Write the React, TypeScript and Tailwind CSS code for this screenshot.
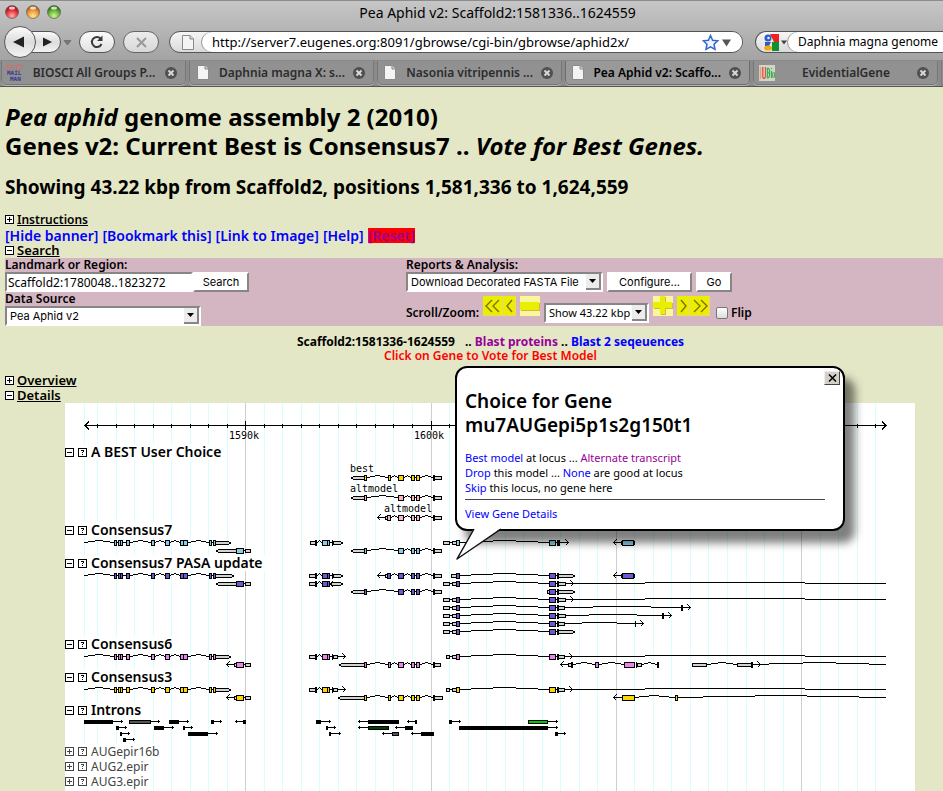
import type { ReactNode } from "react";

type Shape =
  | ["cds", number, number]
  | ["utr", number, number]
  | ["utrR", number, number]
  | ["utrL", number, number]
  | ["blk", number, number]
  | ["arc", number, number]
  | ["line", number, number, number?]
  | ["right", number, number]
  | ["left", number, number];

type Model = { y: number; color?: string; shapes: Shape[] };

const SKY = "#87ceeb";
const SLATE = "#6a5acd";
const VIOLET = "#ee82ee";
const GOLD = "#ffd700";
const PINK = "#ffb6c1";
const UTR = "#d3d3d3";

function ShapeView({ s, y, color }: { s: Shape; y: number; color: string }) {
  const [kind, a, b] = s;
  const w = b - a;
  switch (kind) {
    case "cds":
      return <rect x={a + 0.5} y={y - 2.5} width={w - 1} height={5} fill={color} stroke="#000" />;
    case "utr":
      return <rect x={a + 0.5} y={y - 1.5} width={w - 1} height={3} fill={UTR} stroke="#000" />;
    case "utrR":
      return <path d={`M${a + 0.5} ${y - 1.5}H${b - 3}L${b - 0.5} ${y}L${b - 3} ${y + 1.5}H${a + 0.5}Z`} fill={UTR} stroke="#000" />;
    case "utrL":
      return <path d={`M${b - 0.5} ${y - 1.5}H${a + 3}L${a + 0.5} ${y}L${a + 3} ${y + 1.5}H${b - 0.5}Z`} fill={UTR} stroke="#000" />;
    case "blk":
      return <rect x={a} y={y - 3} width={w} height={6} fill="#000" />;
    case "line":
      return <rect x={a} y={y - 1 + (s[3] ?? 0)} width={w} height={1} fill="#000" />;
    case "arc": {
      const q = [a, a + w / 8, a + (w * 3) / 8, a + (w * 5) / 8, a + (w * 7) / 8, b].map(Math.round);
      return (
        <g>
          {[0, 1, 2, 1, 0].map((lift, i) => (
            <rect key={i} x={q[i]} y={y - 1 - lift} width={q[i + 1] - q[i]} height={1} fill="#000" />
          ))}
        </g>
      );
    }
    case "right":
      return <path d={`M${a} ${y - 0.5}H${b}M${b - 2.5} ${y - 3.5}l3 3l-3 3`} fill="none" stroke="#000" />;
    case "left":
      return <path d={`M${b} ${y - 0.5}H${a}M${a + 2.5} ${y - 3.5}l-3 3l3 3`} fill="none" stroke="#000" />;
  }
}

function Chart({ top, height, children }: { top: number; height: number; children: ReactNode }) {
  return (
    <svg className="block w-[850px] relative" height={height} viewBox={`65 ${top} 850 ${height}`} shapeRendering="crispEdges" aria-hidden="true">
      {children}
    </svg>
  );
}

function Models({ top, height, models, color, children }: { top: number; height: number; models: Model[]; color: string; children?: ReactNode }) {
  return (
    <Chart top={top} height={height}>
      {models.map((m, i) => (
        <g key={i}>
          {m.shapes.map((s, j) => (
            <ShapeView key={j} s={s} y={m.y} color={m.color ?? color} />
          ))}
        </g>
      ))}
      {children}
    </Chart>
  );
}

const geneA = (end: number): Shape[] => [
  ["arc", 84, 114], ["cds", 114, 117], ["line", 117, 118], ["cds", 118, 121], ["cds", 120, 123], ["line", 123, 126],
  ["cds", 126, 130], ["arc", 130, 151], ["cds", 151, 155], ["arc", 155, 165], ["cds", 165, 170], ["arc", 170, 180],
  ["cds", 180, 184], ["cds", 183, 188], ["arc", 188, 209], ["cds", 209, 212], ["line", 212, 213], ["utrR", 215, end], ["cds", 213, 216],
];
const geneB: Shape[] = [["utrL", 216, 237], ["cds", 236, 244], ["line", 244, 245], ["utr", 245, 251]];
const geneBShort: Shape[] = [["left", 227, 235], ["utr", 234, 237], ["cds", 236, 244], ["line", 244, 245], ["utr", 245, 251]];
const geneC = (start: number): Shape[] => [
  ["utr", start, 316], ["blk", 315, 317], ["arc", 317, 322], ["cds", 322, 328], ["cds", 327, 330], ["line", 330, 332], ["blk", 332, 333],
];
const geneD = (start: number, extra: boolean, end = 442): Shape[] => [
  ["utrL", start, 365], ["cds", 364, 367],
  ...((extra ? [["arc", 367, 388], ["cds", 388, 391], ["arc", 391, 398]] : [["arc", 367, 398]]) as Shape[]),
  ["cds", 398, 404], ["arc", 404, 411], ["cds", 411, 415], ["line", 415, 416], ["cds", 416, 420], ["arc", 420, 433], ["utr", 434, end], ["blk", 433, 435],
];
const geneDShort: Shape[] = [
  ["left", 378, 385], ["utr", 385, 388], ["cds", 387, 391], ["arc", 391, 398], ["cds", 398, 404], ["arc", 404, 411],
  ["cds", 411, 415], ["line", 415, 416], ["cds", 416, 420], ["arc", 420, 433], ["utr", 434, 442], ["blk", 433, 435],
];
const geneE = (start: number, firstEnd: number): Shape[] => [
  ["utr", start, firstEnd], ["line", firstEnd, 452], ["utr", 452, 457], ["cds", 456, 460], ["arc", 460, 549], ["cds", 549, 556], ["line", 556, 557],
];
const tailUtr = (end: number): Shape[] => [["utr", 557, end], ["blk", 557, 559]];
const tailRight: Shape[] = [["utrR", 557, 575], ["blk", 557, 559]];
const longRun: Shape[] = [["line", 572, 645], ["line", 645, 805, -1], ["line", 805, 886]];
const pasaE = [...geneE(443, 450)];

const bestModels: Model[] = [
  { y: 478, color: GOLD, shapes: geneD(351, true) },
  { y: 498, shapes: geneD(351, false) },
  { y: 518, shapes: geneDShort },
];
const c7Models: Model[] = [
  { y: 543, shapes: [...geneA(231), ...geneC(310), ["utrR", 333, 343], ...geneE(443, 450), ["blk", 557, 560], ["right", 560, 568], ["left", 614, 622], ["utr", 621, 624], ["utr", 632, 635], ["cds", 622, 634]] },
  { y: 551, shapes: [...geneB, ...geneD(351, false)] },
];
const pasaModels: Model[] = [
  { y: 576, shapes: [...geneA(234), ...geneC(309), ["utrR", 333, 343], ...geneDShort, ["utr", 451, 457], ["cds", 456, 460], ["arc", 460, 549], ["cds", 549, 556], ["line", 556, 557], ...tailRight, ["left", 614, 622], ["utr", 621, 624], ["utr", 632, 635], ["cds", 622, 634]] },
  { y: 584, shapes: [...geneB, ...geneC(309), ["utrR", 331, 343], ["line", 329, 331, 1], ...pasaE, ...tailUtr(566), ["right", 566, 573], ...longRun] },
  { y: 592, shapes: [...geneD(351, false), ["utr", 547, 550], ["cds", 549, 556], ["line", 556, 557], ...tailRight] },
  { y: 600, shapes: [...pasaE, ...tailUtr(566), ["right", 566, 573], ...longRun] },
  { y: 608, shapes: [...pasaE, ...tailUtr(565), ["line", 565, 593], ["line", 593, 651, -1], ["line", 651, 681], ["blk", 681, 683], ["right", 683, 690]] },
  { y: 616, shapes: [...pasaE, ...tailUtr(566), ["line", 566, 589], ["line", 589, 637, -1], ["line", 637, 662], ["blk", 662, 664], ["right", 664, 671]] },
  { y: 624, shapes: [...pasaE, ...tailUtr(565), ["line", 565, 582], ["line", 582, 617, -1], ["line", 617, 635], ["blk", 635, 636], ["right", 636, 643]] },
  { y: 632, shapes: [...pasaE, ...tailRight] },
];
const c6Models: Model[] = [
  { y: 657, shapes: [...geneA(231), ...geneC(309), ["utr", 333, 338], ["right", 338, 345], ...geneE(446, 450), ...tailUtr(565), ["right", 565, 572], ...longRun] },
  {
    y: 665,
    shapes: [
      ...geneBShort, ...geneD(339, true, 441), ["left", 561, 568], ["utr", 568, 572], ["blk", 571, 573], ["arc", 573, 595], ["cds", 595, 599],
      ["arc", 599, 624], ["cds", 624, 635], ["blk", 636, 637], ["utr", 637, 642], ["arc", 642, 657], ["blk", 657, 659],
      ["utr", 692, 707], ["arc", 707, 737], ["utr", 737, 752], ["blk", 751, 753], ["right", 753, 760],
      ["line", 760, 769], ["line", 769, 803, -1], ["line", 803, 836, -2], ["line", 836, 869, -1], ["line", 869, 886],
    ],
  },
];
const c3Models: Model[] = [
  { y: 690, shapes: c6Models[0].shapes },
  {
    y: 698,
    shapes: [
      ...geneBShort, ...geneD(338, true, 443), ["left", 614, 622], ["cds", 622, 635], ["line", 635, 639], ["line", 639, 649, -1], ["line", 649, 659, -2],
      ["line", 659, 669, -1], ["line", 669, 675], ["cds", 675, 678], ["line", 678, 703], ["line", 703, 755, -1], ["line", 755, 807, -2], ["line", 807, 859, -1], ["line", 859, 886],
    ],
  },
];

/* row, bar start, bar end, arrow tip, fill */
const introns: [number, number, number, number, string?][] = [
  [0, 84, 113, 123], [0, 129, 151, 160, "#555"], [0, 169, 179, 189], [0, 211, 214, 222], [0, 243, 246, 235], [0, 316, 321, 331],
  [0, 368, 399, 358], [0, 415, 417, 407], [0, 449, 452, 461], [0, 528, 548, 558, "#00c800"],
  [1, 116, 119, 127], [1, 154, 164, 174], [1, 183, 185, 193], [1, 326, 328, 336], [1, 368, 389, 358, "#004000"], [1, 405, 413, 395], [1, 459, 548, 558],
  [2, 120, 122, 130], [2, 188, 208, 218], [2, 329, 331, 341], [2, 392, 399, 382, "#555"], [2, 421, 434, 411], [2, 555, 558, 566],
  [3, 123, 126, 135],
];

const ticks = Array.from({ length: 43 }, (_, i) => ({ x: Math.floor(97.5 + i * 18.53), major: i % 10 === 8 })).filter((t) => t.x < 886);

function Toggle({ open }: { open: boolean }) {
  return (
    <svg width="9" height="9" viewBox="0 0 9 9" shapeRendering="crispEdges" className="shrink-0" aria-hidden="true">
      <rect x="0.5" y="0.5" width="8" height="8" fill="#fff" stroke="currentColor" />
      <path d={open ? "M2 4.5H7" : "M2 4.5H7M4.5 2V7"} stroke="currentColor" />
    </svg>
  );
}

function HelpIcon() {
  return (
    <svg width="9" height="9" viewBox="0 0 9 9" shapeRendering="crispEdges" className="shrink-0" aria-hidden="true">
      <rect x="0.5" y="0.5" width="8" height="8" fill="#fff" stroke="currentColor" />
      <path d="M3 2.5H6M5.5 3V4M4 4.5H5M4 6.5H5" stroke="currentColor" />
    </svg>
  );
}

function TrackLabel({ name, open = true }: { name: string; open?: boolean }) {
  return (
    <div className={`relative flex items-center ${open ? "h-4 text-black" : "h-[15px] text-[#444]"}`}>
      <button type="button" className="flex items-center gap-1 bg-white pr-1" aria-label={`Toggle ${name}`}>
        <Toggle open={open} />
        <HelpIcon />
        <span className={open ? "text-[14px] leading-4 font-semibold" : "text-[12px] leading-[15px]"}>{name}</span>
      </button>
    </div>
  );
}

function SectionHead({ name, open, small }: { name: string; open: boolean; small?: boolean }) {
  return (
    <button type="button" className="flex h-[15px] items-center gap-[3px] self-start font-semibold text-black">
      <Toggle open={open} />
      <span className={`underline leading-[15px] ${small ? "text-[12px]" : "text-[13px]"}`}>{name}</span>
    </button>
  );
}

function Picker({ label, value, className }: { label: string; value: string; className: string }) {
  return (
    <div className={`relative h-5 shrink-0 border-2 border-t-[#868686] border-l-[#868686] border-r-white border-b-white bg-white ${className}`}>
      <select aria-label={label} className="block h-4 w-full appearance-none bg-transparent pl-[3px] text-[11px] leading-4 outline-none">
        <option>{value}</option>
      </select>
      <span className="pointer-events-none absolute top-0 right-0 flex h-4 w-[15px] items-center justify-center border-r-2 border-b-2 border-[#868686] bg-[#ececec]">
        <svg width="7" height="4" viewBox="0 0 7 4" aria-hidden="true"><path d="M0 0H7L3.5 4Z" /></svg>
      </span>
    </div>
  );
}

function PlainButton({ children, width }: { children: ReactNode; width: string }) {
  return (
    <button type="button" className={`h-5 shrink-0 border-2 border-t-white border-l-white border-r-[#868686] border-b-[#868686] bg-white text-center font-[Inter] text-[11px] leading-4 ${width}`}>
      {children}
    </button>
  );
}

function YellowButton({ label, w, pale, d, fill }: { label: string; w: number; pale?: boolean; d: string; fill?: boolean }) {
  return (
    <button type="button" aria-label={label} className="shrink-0">
      <svg width={w} height="20" viewBox={`0 0 ${w} 20`} className="block" aria-hidden="true">
        <rect width={w} height="20" fill={pale ? "#f8f89a" : "#e8f000"} />
        {!pale && <path d={`M0 19.5H${w - 0.5}V0`} fill="none" stroke="#f2d27a" />}
        {fill ? <><path d={d} fill="#dcae5c" transform="translate(1 1)" /><path d={d} fill="#e8f000" /></> : <path d={d} fill="none" stroke="#8a6a00" strokeWidth="1.4" />}
      </svg>
    </button>
  );
}

function PageIcon() {
  return (
    <svg width="12" height="15" viewBox="0 0 12 15" className="shrink-0" aria-hidden="true">
      <path d="M0.5 0.5H8L11.5 4V14.5H0.5Z" fill="#f4f4f4" stroke="#8a8a8a" />
      <path d="M8 0.5V4H11.5" fill="#d0d0d0" stroke="#8a8a8a" />
    </svg>
  );
}

function MailmanIcon() {
  return (
    <svg width="17" height="18" viewBox="0 0 17 18" className="shrink-0 overflow-visible" aria-hidden="true">
      <path d="M0 1.500H9M0 5.500H9M1 3.500H8" stroke="#d66" strokeDasharray="2 1" />
      <circle cx="13" cy="3.500" r="2.800" fill="none" stroke="#d66" />
      <text x="1" y="11" className="font-['DejaVu_Sans_Mono',monospace] text-[6px] font-bold" fill="#33388f">MAIL</text>
      <text x="4" y="17" className="font-['DejaVu_Sans_Mono',monospace] text-[6px] font-bold" fill="#33388f">MAN</text>
    </svg>
  );
}

function BioIcon() {
  return (
    <svg width="16" height="16" viewBox="0 0 16 16" className="shrink-0" aria-hidden="true">
      <rect width="16" height="16" fill="#cfd6c8" />
      <path d="M1.5 2V14" stroke="#e8a070" strokeWidth="1.500" />
      <path d="M3.800 2V12Q5 15 6.500 12V2" fill="none" stroke="#e05050" strokeWidth="1.300" />
      <path d="M8.500 3V13Q11 13 10.500 8H8.500M8.500 3Q11 3 10.500 8M12.500 6V13M12.500 3V4" fill="none" stroke="#3cae4c" strokeWidth="1.200" />
      <ellipse cx="14.600" cy="10" rx="1" ry="3" fill="none" stroke="#3cae4c" />
    </svg>
  );
}

function Tab({ icon, title, active }: { icon: ReactNode; title: string; active?: boolean }) {
  return (
    <div role="tab" aria-selected={!!active} className={`flex h-6 w-[185px] shrink-0 items-center gap-2 rounded-b-[5px] border border-t-0 pr-2 pl-1 shadow-[0_1px_0_#b4b4b4] ${active ? "border-[#6d6d6d] bg-[#999] text-black" : "border-[#777] bg-[#919191] text-[#2c2c2c]"}`}>
      <span className="flex w-[17px] justify-center">{icon}</span>
      <span className="flex-1 text-center text-[12px] leading-4 font-semibold whitespace-nowrap">{title}</span>
      <button type="button" aria-label={`Close ${title}`}>
        <svg width="12" height="12" viewBox="0 0 12 12" className="block" aria-hidden="true">
          <circle cx="6" cy="6" r="6" fill="#505050" />
          <path d="M3.500 3.500L8.500 8.500M8.500 3.500L3.500 8.500" stroke="#d8d8d8" strokeWidth="2" />
        </svg>
      </button>
    </div>
  );
}

function BrowserChrome() {
  return (
    <header className="shrink-0 overflow-hidden border-t border-[#8c8c8c] bg-linear-to-b from-[#c6c6c6] to-[#949494]">
      <div className="relative flex h-[23px] items-center justify-center">
        <svg width="60" height="16" viewBox="0 0 60 16" className="absolute top-[3px] left-1" aria-hidden="true">
          <defs>
            <radialGradient id="red" cx="0.5" cy="0.8" r="0.7"><stop offset="0" stopColor="#ffb0b0" /><stop offset="0.6" stopColor="#e8343c" /><stop offset="1" stopColor="#a01018" /></radialGradient>
            <radialGradient id="amber" cx="0.5" cy="0.8" r="0.7"><stop offset="0" stopColor="#ffe890" /><stop offset="0.6" stopColor="#f0983c" /><stop offset="1" stopColor="#a86010" /></radialGradient>
            <radialGradient id="green" cx="0.5" cy="0.8" r="0.7"><stop offset="0" stopColor="#d0f890" /><stop offset="0.6" stopColor="#6cb43c" /><stop offset="1" stopColor="#2c6c14" /></radialGradient>
          </defs>
          {["red", "amber", "green"].map((c, i) => (
            <g key={c}>
              <circle cx={8 + i * 21} cy="8" r="6.500" fill={`url(#${c})`} stroke="#555" strokeOpacity="0.6" />
              <ellipse cx={8 + i * 21} cy="4" rx="3" ry="1.500" fill="#fff" opacity="0.75" />
            </g>
          ))}
        </svg>
        <h1 className="pl-[52px] text-[14px] leading-5">Pea Aphid v2: Scaffold2:1581336..1624559</h1>
      </div>
      <div className="flex h-9 items-center pl-1">
        <svg width="70" height="32" viewBox="0 0 70 32" className="shrink-0" role="img" aria-label="Back and forward">
          <defs>
            <linearGradient id="knob" x2="0" y2="1"><stop offset="0" stopColor="#fdfdfd" /><stop offset="0.5" stopColor="#dcdcdc" /><stop offset="1" stopColor="#f4f4f4" /></linearGradient>
          </defs>
          <rect x="16" y="5.500" width="40.500" height="21" rx="10.500" fill="url(#knob)" stroke="#555" />
          <circle cx="16" cy="16" r="15.500" fill="url(#knob)" stroke="#555" />
          <path d="M9 16L20 10.500V21.500Z" fill="#222" />
          <path d="M39 11.500V20.500L48 16Z" fill="#222" />
          <path d="M60 14.500H67L63.500 19Z" fill="#777" stroke="#555" strokeWidth="0.500" />
        </svg>
        <button type="button" aria-label="Reload" className="ml-[5px] flex h-[22px] w-9 shrink-0 items-center justify-center rounded-full border border-[#555] bg-linear-to-b from-[#fbfbfb] to-[#e2e2e2]">
          <svg width="14" height="14" viewBox="0 0 14 14" aria-hidden="true">
            <path d="M10.500 3.500A5 5 0 1 0 11.500 9" fill="none" stroke="#3a3a3a" strokeWidth="2" />
            <path d="M12.500 0.500V6H7Z" fill="#3a3a3a" />
          </svg>
        </button>
        <button type="button" aria-label="Stop" className="ml-2 flex h-[22px] w-9 shrink-0 items-center justify-center rounded-full border border-[#666] bg-linear-to-b from-[#ececec] to-[#d8d8d8]">
          <svg width="11" height="11" viewBox="0 0 11 11" aria-hidden="true"><path d="M1 1L10 10M10 1L1 10" stroke="#999" strokeWidth="2" /></svg>
        </button>
        <div className="ml-[10px] flex h-[22px] min-w-0 flex-[574] items-center rounded-full border border-[#555] bg-linear-to-b from-[#f6f6f6] to-[#dadada] pl-3">
          <PageIcon />
          <div className="ml-2 flex h-5 min-w-0 flex-1 items-center rounded-full bg-white pr-[10px] pl-[10px] shadow-[-1px_0_0_#999]">
            <input type="text" aria-label="Address" defaultValue="http://server7.eugenes.org:8091/gbrowse/cgi-bin/gbrowse/aphid2x/" className="h-5 min-w-0 flex-1 bg-transparent text-[13px] leading-5 outline-none" />
            <svg width="30" height="17" viewBox="0 0 30 17" className="shrink-0" aria-hidden="true">
              <path d="M8.500 1.500L10.600 6.200L15.700 6.800L12 10.200L13 15.300L8.500 12.800L4 15.300L5 10.200L1.300 6.800L6.400 6.200Z" fill="#eef4ff" stroke="#3465d0" strokeWidth="1.500" />
              <path d="M20 5.500H29L24.500 12.500Z" fill="#555" />
            </svg>
          </div>
        </div>
        <div className="ml-3 flex h-[22px] w-[188px] shrink-0 items-center rounded-l-full border border-r-0 border-[#555] bg-linear-to-b from-[#f6f6f6] to-[#dadada] pl-[6px]">
          <svg width="26" height="17" viewBox="0 0 26 17" className="shrink-0" aria-hidden="true">
            <path d="M8 0H17V8H12Z" fill="#e22" />
            <path d="M10 8H17V17H9Z" fill="#109030" />
            <path d="M0 9H10V17H0Z" fill="#e8e8e8" />
            <circle cx="6" cy="4" r="3.500" fill="#2a5cc8" />
            <path d="M3 8H9L7 12H3Z" fill="#2a5cc8" />
            <ellipse cx="6" cy="14" rx="4" ry="2.600" fill="#f4a80c" />
            <circle cx="6.500" cy="4" r="1.300" fill="#eee" />
            <path d="M19 6.500H25L22 10.500Z" fill="#444" />
          </svg>
          <input type="text" aria-label="Web search" defaultValue="Daphnia magna genome" className="h-5 min-w-0 flex-1 rounded-l-full bg-white pl-[10px] text-[12px] leading-5 shadow-[-1px_0_0_#999] outline-none" />
        </div>
      </div>
      <div role="tablist" className="flex h-[27px] gap-[3px] border-t border-b border-t-[#888] border-b-[#555] bg-[#8b8b8b] pl-px">
        <Tab icon={<MailmanIcon />} title="BIOSCI All Groups P..." />
        <Tab icon={<PageIcon />} title="Daphnia magna X: s..." />
        <Tab icon={<PageIcon />} title="Nasonia vitripennis ..." />
        <Tab icon={<PageIcon />} title="Pea Aphid v2: Scaffo..." active />
        <Tab icon={<BioIcon />} title="EvidentialGene" />
        <div className="h-6 flex-1 rounded-bl-[5px] border-b border-l border-[#777] bg-[#919191]" />
      </div>
    </header>
  );
}

function SearchForm() {
  return (
    <form className="flex bg-[#d4b6c2] text-[12px] font-semibold" onSubmit={(e) => e.preventDefault()}>
      <div className="w-[401px] shrink-0">
        <label htmlFor="landmark" className="block h-[14px] leading-[13px]">Landmark or Region:</label>
        <div className="flex font-normal">
          <input id="landmark" type="text" defaultValue="Scaffold2:1780048..1823272" className="h-5 w-[188px] border-2 border-t-[#868686] border-l-[#868686] border-r-white border-b-white bg-white px-px text-[12px] outline-none" />
          <PlainButton width="w-14">Search</PlainButton>
        </div>
        <p className="h-[14px] leading-[13px]">Data Source</p>
        <div className="font-normal"><Picker label="Data Source" value="Pea Aphid v2" className="w-[196px] font-[Inter]" /></div>
      </div>
      <div className="min-w-0 flex-1">
        <p className="h-[14px] leading-[13px]">Reports &amp; Analysis:</p>
        <div className="flex gap-1 font-normal">
          <Picker label="Report" value="Download Decorated FASTA File" className="w-[197px] font-[Inter]" />
          <PlainButton width="w-[85px]">Configure...</PlainButton>
          <PlainButton width="w-9">Go</PlainButton>
        </div>
        <div className="flex h-[34px] items-end gap-1 pb-[3px]">
          <span className="w-[73px] leading-5 whitespace-nowrap">Scroll/Zoom:</span>
          <div className="mb-[7px] flex">
            <YellowButton label="Scroll far left" w={20} d="M9 4L3 10L9 16M16 4L10 10L16 16" />
            <YellowButton label="Scroll left" w={13} d="M9 4L4 10L9 16" />
          </div>
          <div className="mb-[7px] flex"><YellowButton label="Zoom out" w={20} pale fill d="M0 6H19V14H0Z" /></div>
          <div className="font-normal"><Picker label="Zoom level" value="Show 43.22 kbp" className="w-[105px]" /></div>
          <div className="mb-[7px] flex"><YellowButton label="Zoom in" w={20} pale fill d="M7 0H12V6H19V12H12V18H7V12H0V6H7Z" /></div>
          <div className="mb-[7px] flex">
            <YellowButton label="Scroll right" w={13} d="M4 4L9 10L4 16" />
            <YellowButton label="Scroll far right" w={20} d="M4 4L10 10L4 16M11 4L17 10L11 16" />
          </div>
          <label className="ml-[2px] flex items-center gap-[3px] leading-5">
            <input type="checkbox" className="size-3 appearance-none rounded-[2px] border border-[#777] bg-linear-to-b from-white to-[#ddd]" />
            Flip
          </label>
        </div>
      </div>
    </form>
  );
}

function GeneBalloon() {
  const blue = "text-[#0000ff]";
  return (
    <div role="dialog" aria-label="Choice for Gene" className="absolute -top-[37px] left-[390px] w-[390px]">
      <div className="rounded-[12px] border-2 border-black bg-white px-2 pt-[21px] pb-2 shadow-[10px_12px_9px_rgba(0,0,0,0.5)]">
        <button type="button" aria-label="Close" className="absolute top-[5px] right-[5px] flex h-[14px] w-4 items-center justify-center border border-t-[#eee] border-l-[#eee] border-r-[#444] border-b-[#444] bg-[#d4d0c8]">
          <svg width="9" height="8" viewBox="0 0 9 8" aria-hidden="true"><path d="M1 0.500L8 7.500M8 0.500L1 7.500" stroke="#000" strokeWidth="1.500" /></svg>
        </button>
        <h3 className="text-[19px] leading-6 font-semibold">Choice for Gene<br />mu7AUGepi5p1s2g150t1</h3>
        <p className="mt-[13px] text-[11px] leading-[15px]">
          <a href="#best" className={blue}>Best model</a> at locus ... <a href="#alt" className="text-[#990099]">Alternate transcript</a><br />
          <a href="#drop" className={blue}>Drop</a> this model ... <a href="#none" className={blue}>None</a> are good at locus<br />
          <a href="#skip" className={blue}>Skip</a> this locus, no gene here
        </p>
        <hr className="mt-1 mr-[10px] border-t border-[#444]" />
        <p className="mt-[6px] text-[11px] leading-[15px]"><a href="#details" className={blue}>View Gene Details</a></p>
      </div>
      <svg width="50" height="34" viewBox="0 0 50 34" className="absolute top-full -mt-[3px]" aria-hidden="true">
        <path d="M19 0L2 31L46 0Z" fill="#fff" />
        <path d="M19 1L2 31L46 1" fill="none" stroke="#111" strokeWidth="1.500" strokeLinejoin="round" />
      </svg>
    </div>
  );
}

function GridLines() {
  return (
    <svg className="absolute inset-0 h-full w-[850px]" shapeRendering="crispEdges" aria-hidden="true">
      <rect x="19" width="1" height="100%" fill="#d8ffff" />
      {ticks.map((t) => (
        <rect key={t.x} x={t.x - 65} width="1" height="100%" fill={t.major ? "#cfcfcf" : "#d8ffff"} />
      ))}
    </svg>
  );
}

export default function App() {
  return (
    <div className="flex min-h-screen flex-col overflow-x-hidden bg-[#e4e7c5] font-['Noto_Sans',sans-serif] text-black">
      <BrowserChrome />
      <main className="flex flex-1 flex-col pl-[5px]">
        <h1 className="mt-[15px] text-[24px] leading-[29px] font-bold">
          <i>Pea aphid</i> genome assembly 2 (2010)<br />
          Genes v2: Current Best is Consensus7 .. <i>Vote for Best Genes.</i>
        </h1>
        <h2 className="mt-[15px] text-[19px] leading-6 font-bold">Showing 43.22 kbp from Scaffold2, positions 1,581,336 to 1,624,559</h2>
        <div className="mt-[13px] flex flex-col">
          <SectionHead name="Instructions" open={false} small />
          <nav className="flex h-4 items-end gap-1 text-[14px] leading-[15px] font-semibold text-[#0000ff]">
            <a href="#hide">[Hide banner]</a>
            <a href="#bookmark">[Bookmark this]</a>
            <a href="#image">[Link to Image]</a>
            <a href="#help">[Help]</a>
            <a href="#reset" className="h-[15px] bg-[#ff0000] text-[#990099]">[Reset]</a>
          </nav>
          <SectionHead name="Search" open />
        </div>
        <SearchForm />
        <div className="mt-[9px] pl-[33px] text-center text-[12px] leading-[14px]">
          <p className="font-bold"><span className="mr-[10px]">Scaffold2:1581336-1624559</span>.. <a href="#proteins" className="text-[#990099]">Blast proteins</a> .. <a href="#blast2" className="text-[#0000ff]">Blast 2 seqeuences</a></p>
          <p className="font-semibold text-[#ff0000]">Click on Gene to Vote for Best Model</p>
        </div>
        <div className="mt-[10px] flex flex-col">
          <SectionHead name="Overview" open={false} />
          <SectionHead name="Details" open />
        </div>
        <section className="relative ml-[60px] w-[850px] flex-1 bg-white">
          <GridLines />
          <Chart top={403} height={41}>
            <path d="M85 425.500H886M89 421.500l-4 4l4 4M882 421.500l4 4l-4 4" fill="none" stroke="#000" />
            {ticks.map((t) => (
              <rect key={t.x} x={t.x} y={t.major ? 421 : 424} width="1" height={t.major ? 9 : 4} fill="#000" />
            ))}
            <g className="font-['DejaVu_Sans_Mono',monospace] text-[10px]">
              <text x="229" y="439">1590k</text>
              <text x="414" y="439">1600k</text>
            </g>
          </Chart>
          <TrackLabel name="A BEST User Choice" />
          <Models top={460} height={62} color={PINK} models={bestModels}>
            <g className="font-['DejaVu_Sans_Mono',monospace] text-[10px]">
              <text x="350" y="472">best</text>
              <text x="350" y="492">altmodel</text>
              <text x="384" y="512">altmodel</text>
            </g>
          </Models>
          <TrackLabel name="Consensus7" />
          <Models top={538} height={17} color={SKY} models={c7Models} />
          <TrackLabel name="Consensus7 PASA update" />
          <Models top={571} height={65} color={SLATE} models={pasaModels} />
          <TrackLabel name="Consensus6" />
          <Models top={652} height={17} color={VIOLET} models={c6Models} />
          <TrackLabel name="Consensus3" />
          <Models top={685} height={17} color={GOLD} models={c3Models} />
          <TrackLabel name="Introns" />
          <Chart top={718} height={26}>
            {introns.map(([row, a, b, tip, fill], i) => {
              const y = 720 + row * 6;
              const right = tip > b;
              return (
                <g key={i}>
                  <rect x={right ? b : tip} y={y + 1} width={right ? tip - b : a - tip} height="1" fill="#000" />
                  <rect x={right ? tip - 2 : tip + 1} y={y} width="1" height="3" fill="#000" />
                  <rect x={a} y={y} width={b - a} height="4" fill="#000" />
                  {fill && <rect x={a + 1} y={y + 1} width={b - a - 2} height="2" fill={fill} />}
                </g>
              );
            })}
          </Chart>
          <TrackLabel name="AUGepir16b" open={false} />
          <TrackLabel name="AUG2.epir" open={false} />
          <TrackLabel name="AUG3.epir" open={false} />
          <GeneBalloon />
        </section>
      </main>
    </div>
  );
}
